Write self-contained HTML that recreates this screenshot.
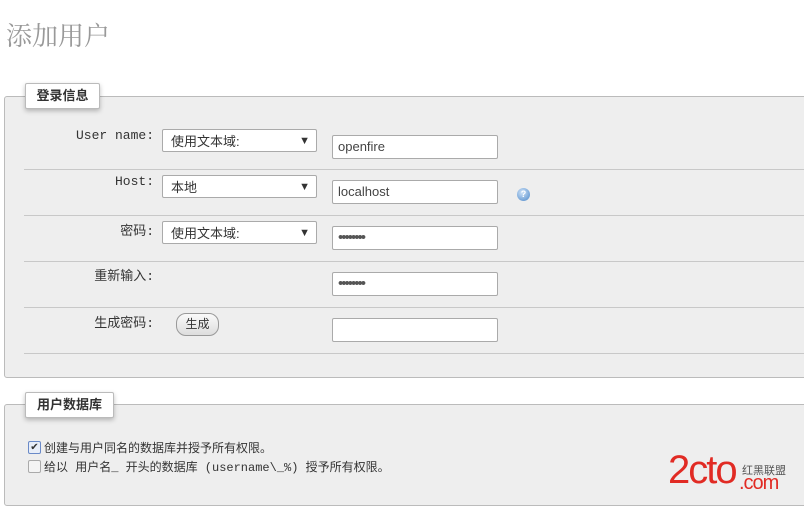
<!DOCTYPE html>
<html><head><meta charset="utf-8"><style>
body{margin:0;width:804px;height:498px;background:#fff;position:relative;overflow:hidden;font-family:"Liberation Sans","Noto Sans CJK SC",sans-serif;font-size:13px;color:#333}
.a{position:absolute}
h1{position:absolute;left:6px;top:16px;margin:0;font:26px "Liberation Serif","Noto Serif CJK SC",serif;color:#999}
.fs{position:absolute;left:4px;width:830px;background:#eee;border:1px solid #bbb;border-radius:3px}
.lg{position:absolute;background:#fff;border:1px solid #bbb;border-radius:2px;box-shadow:0 2px 5px rgba(0,0,0,.25);font-weight:bold;font-size:13px;color:#333;text-align:center;line-height:24px}
.sep{position:absolute;left:24px;width:790px;height:1px;background:#c8c8c8}
.lbl{position:absolute;right:650px;font-family:"Liberation Mono","Noto Sans CJK SC",monospace;font-size:13px;color:#333}
.sel{position:absolute;left:162px;width:155px;height:23px;background:#fff;border:1px solid #aaa;border-radius:2px;font-size:13px;line-height:23px;box-sizing:border-box;padding-left:8px}
.sel:after{content:"▼";position:absolute;right:6px;font-size:11px}
.in{position:absolute;left:332px;width:166px;height:24px;background:#fff;border:1px solid #aaa;border-radius:2px;box-sizing:border-box;padding-left:5px;line-height:22px;font-size:13px;color:#444}
.dots{font-size:15px;letter-spacing:-2px;color:#555}
</style></head><body>
<h1>添加用户</h1>
<div class="fs" style="top:96px;height:280px"></div>
<div class="lg" style="left:25px;top:83px;width:73px;height:24px">登录信息</div>
<div class="sep" style="top:169px"></div>
<div class="sep" style="top:215px"></div>
<div class="sep" style="top:261px"></div>
<div class="sep" style="top:307px"></div>
<div class="sep" style="top:353px"></div>

<div class="lbl" style="top:128px">User name:</div>
<div class="sel" style="top:129px">使用文本域:</div>
<div class="in" style="top:135px">openfire</div>

<div class="lbl" style="top:174px">Host:</div>
<div class="sel" style="top:175px">本地</div>
<div class="in" style="top:180px">localhost</div>
<div class="a" style="left:517px;top:188px;width:13px;height:13px;border-radius:50%;background:radial-gradient(circle at 40% 35%,#cfe3f8,#4a86c8);color:#fff;font-size:9px;font-weight:bold;text-align:center;line-height:13px">?</div>

<div class="lbl" style="top:220px">密码:</div>
<div class="sel" style="top:221px">使用文本域:</div>
<div class="in dots" style="top:226px">••••••••</div>

<div class="lbl" style="top:265px">重新输入:</div>
<div class="in dots" style="top:272px">••••••••</div>

<div class="lbl" style="top:312px">生成密码:</div>
<div class="a" style="left:176px;top:313px;width:41px;height:21px;border:1px solid #999;border-radius:10px;background:linear-gradient(#fafafa,#ddd);text-align:center;line-height:20px;font-size:12px">生成</div>
<div class="in" style="top:318px"></div>

<div class="fs" style="top:404px;height:100px"></div>
<div class="lg" style="left:25px;top:392px;width:87px;height:24px">用户数据库</div>
<div class="a" style="left:28px;top:441px;width:11px;height:11px;border:1px solid #6a8ac8;border-radius:2px;background:#e8eef8;font-size:10px;line-height:11px;text-align:center">✔</div>
<div class="a" style="left:44px;top:439px;font-size:12px">创建与用户同名的数据库并授予所有权限。</div>
<div class="a" style="left:28px;top:460px;width:11px;height:11px;border:1px solid #aaa;border-radius:2px;background:#f4f4f4"></div>
<div class="a" style="left:44px;top:458px;font-size:12px;font-family:'Liberation Mono','Noto Sans CJK SC',monospace">给以 用户名_ 开头的数据库 (username\_%) 授予所有权限。</div>
<div class="a" style="left:668px;top:448px;font-size:40px;line-height:44px;color:#e12b24;font-family:'Liberation Sans',sans-serif;letter-spacing:-2px">2cto</div>
<div class="a" style="left:742px;top:462px;font-size:11px;color:#555">红黑联盟</div>
<div class="a" style="left:739px;top:472px;font-size:20px;color:#e12b24;letter-spacing:-1px">.com</div>
</body></html>
